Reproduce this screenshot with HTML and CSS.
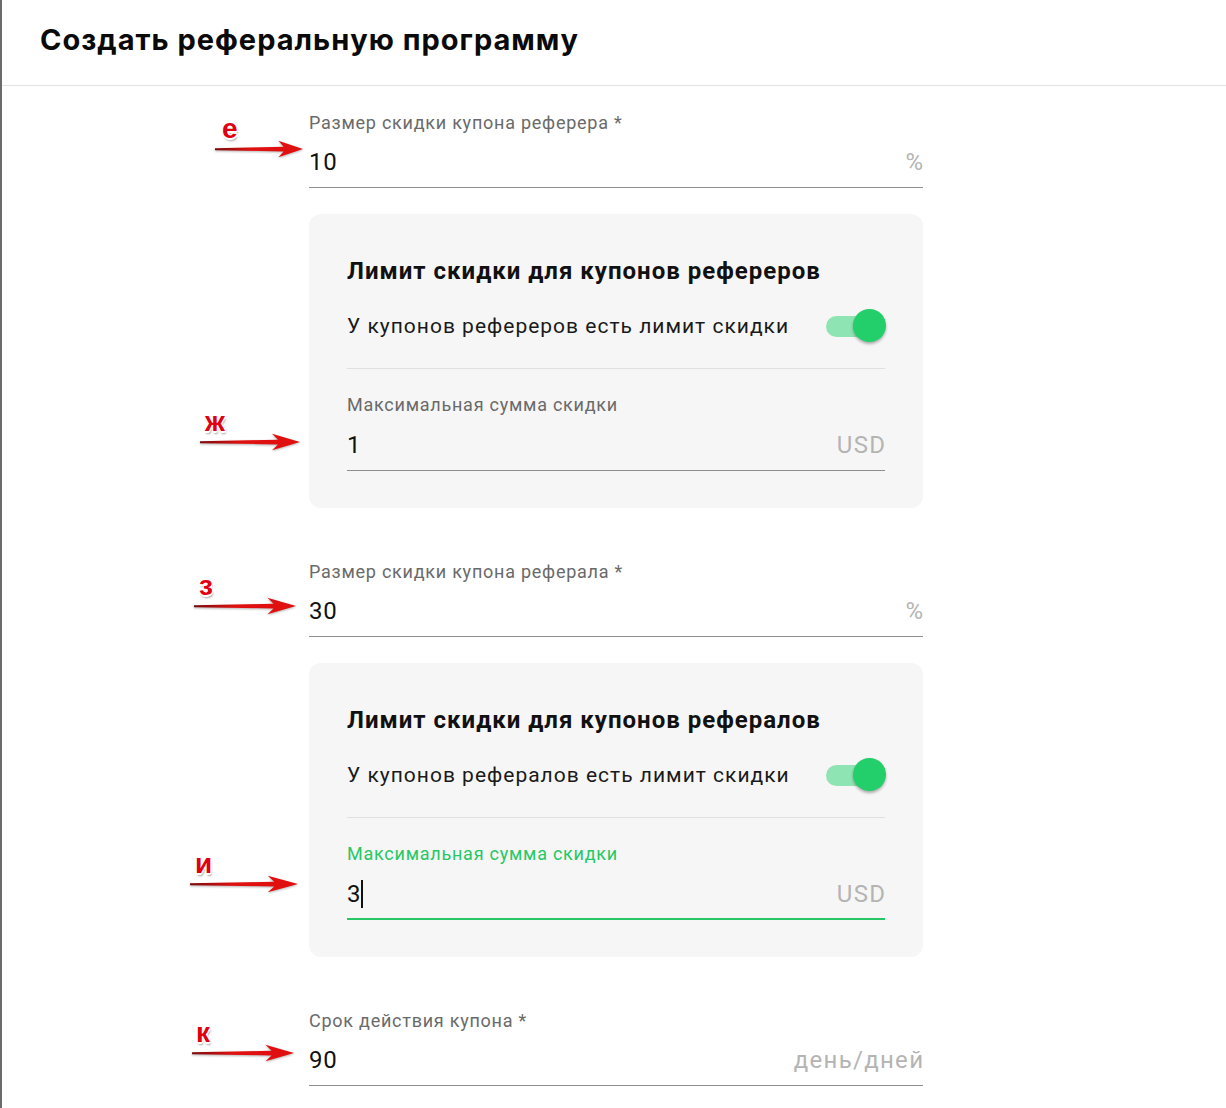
FILE: index.html
```html
<!DOCTYPE html>
<html lang="ru">
<head>
<meta charset="utf-8">
<title>Создать реферальную программу</title>
<link rel="stylesheet" href="styles.css">
</head>
<body>
<div class="page">
  <header class="header">
    <h1 class="title">Создать реферальную программу</h1>
  </header>
  <main class="form">
    <div class="field">
      <div class="note note-e">
        <span class="note-letter">е</span>
        <svg class="note-arrow" viewBox="0 0 100 18" preserveAspectRatio="none"><defs><linearGradient id="g1" x1="0" x2="1" y1="0" y2="0"><stop offset="0" stop-color="#7a0a0a"/><stop offset="0.4" stop-color="#e01010"/><stop offset="1" stop-color="#e01010"/></linearGradient></defs><path d="M0 8.2 L78 6.8 L72 0.8 L100 9 L72 17.2 L78 11.4 L0 10.2 Z" fill="url(#g1)"/></svg>
      </div>
      <label class="field-label">Размер скидки купона реферера *</label>
      <div class="field-input"><span class="field-value">10</span><span class="field-suffix">%</span></div>
    </div>

    <section class="card">
      <h2 class="card-title">Лимит скидки для купонов рефереров</h2>
      <div class="toggle-row">
        <span>У купонов рефереров есть лимит скидки</span>
        <span class="toggle"><span class="toggle-track"></span><span class="toggle-knob"></span></span>
      </div>
      <div class="card-field field">
        <div class="note note-zh">
          <span class="note-letter">ж</span>
          <svg class="note-arrow" viewBox="0 0 100 18" preserveAspectRatio="none"><path d="M0 8.2 L78 6.8 L72 0.8 L100 9 L72 17.2 L78 11.4 L0 10.2 Z" fill="url(#g1)"/></svg>
        </div>
        <label class="field-label">Максимальная сумма скидки</label>
        <div class="field-input"><span class="field-value">1</span><span class="field-suffix">USD</span></div>
      </div>
    </section>

    <div class="field field-gap">
      <div class="note note-z">
        <span class="note-letter">з</span>
        <svg class="note-arrow" viewBox="0 0 100 18" preserveAspectRatio="none"><path d="M0 8.2 L78 6.8 L72 0.8 L100 9 L72 17.2 L78 11.4 L0 10.2 Z" fill="url(#g1)"/></svg>
      </div>
      <label class="field-label">Размер скидки купона реферала *</label>
      <div class="field-input"><span class="field-value">30</span><span class="field-suffix">%</span></div>
    </div>

    <section class="card">
      <h2 class="card-title">Лимит скидки для купонов рефералов</h2>
      <div class="toggle-row">
        <span>У купонов рефералов есть лимит скидки</span>
        <span class="toggle"><span class="toggle-track"></span><span class="toggle-knob"></span></span>
      </div>
      <div class="card-field field focused">
        <div class="note note-i">
          <span class="note-letter">и</span>
          <svg class="note-arrow" viewBox="0 0 100 18" preserveAspectRatio="none"><path d="M0 8.2 L78 6.8 L72 0.8 L100 9 L72 17.2 L78 11.4 L0 10.2 Z" fill="url(#g1)"/></svg>
        </div>
        <label class="field-label">Максимальная сумма скидки</label>
        <div class="field-input"><span class="field-value">3<span class="caret"></span></span><span class="field-suffix">USD</span></div>
      </div>
    </section>

    <div class="field field-gap">
      <div class="note note-k">
        <span class="note-letter">к</span>
        <svg class="note-arrow" viewBox="0 0 100 18" preserveAspectRatio="none"><path d="M0 8.2 L78 6.8 L72 0.8 L100 9 L72 17.2 L78 11.4 L0 10.2 Z" fill="url(#g1)"/></svg>
      </div>
      <label class="field-label">Срок действия купона *</label>
      <div class="field-input"><span class="field-value">90</span><span class="field-suffix">день/дней</span></div>
    </div>
  </main>
</div>
</body>
</html>
```

FILE: styles.css
```css
* { box-sizing: border-box; }
html, body { margin: 0; padding: 0; background: #fff; }
body { font-family: Roboto, "Noto Sans", Arial, sans-serif; color: #111; overflow: hidden; }

.page {
  border-left: 2px solid #6b6b6b;
  min-height: 1108px;
}

.header {
  height: 86px;
  border-bottom: 1px solid #e3e3e3;
  display: flex;
  align-items: center;
  padding-left: 38px;
}
.title {
  margin: 0;
  font-family: Inter, "Noto Sans", sans-serif;
  font-weight: 700;
  font-size: 29px;
  letter-spacing: 1px;
  color: #0a0a0a;
  padding-bottom: 6px;
}

.form {
  width: 614px;
  margin-left: 307px;
  padding-top: 26px;
  display: flex;
  flex-direction: column;
}

.field { position: relative; }
.field-gap { margin-top: 53px; }

.field-label {
  display: block;
  font-size: 18px;
  letter-spacing: 0.75px;
  line-height: 22px;
  color: #6a6a6a;
}
.field-input {
  display: flex;
  align-items: center;
  justify-content: space-between;
  padding: 12px 0 9px;
  border-bottom: 1px solid #8e8e8e;
}
.field-value {
  font-size: 24px;
  letter-spacing: 0.8px;
  line-height: 32px;
  color: #111;
  display: flex;
  align-items: center;
}
.field-suffix {
  font-size: 24px;
  letter-spacing: 1.3px;
  margin-right: -1.3px;
  line-height: 32px;
  color: #b4b4b4;
}
.caret {
  display: inline-block;
  width: 2px;
  height: 28px;
  background: #111;
  margin-left: 0;
}

.card {
  margin-top: 26px;
  background: #f6f6f6;
  border-radius: 12px;
  padding: 41px 38px 37px;
}
.card-title {
  margin: 0;
  font-size: 24px;
  letter-spacing: 1px;
  line-height: 32px;
  font-weight: 700;
  color: #111;
}
.toggle-row {
  margin-top: 19px;
  height: 40px;
  display: flex;
  align-items: center;
  justify-content: space-between;
  font-size: 21px;
  letter-spacing: 1px;
  color: #1a1a1a;
  border-bottom: 1px solid #e0e0e0;
  box-sizing: content-box;
  padding-bottom: 22px;
}
.toggle {
  position: relative;
  width: 60px;
  height: 34px;
  display: block;
}
.toggle-track {
  position: absolute;
  left: 1px;
  top: 7px;
  width: 52px;
  height: 21px;
  border-radius: 11px;
  background: #8fe4b3;
}
.toggle-knob {
  position: absolute;
  right: -1px;
  top: 0;
  width: 33px;
  height: 33px;
  border-radius: 50%;
  background: #22cf6b;
  box-shadow: 0 2px 3px rgba(0,0,0,0.3);
}

.card-field { margin-top: 25px; }
.card-field .field-input { padding-top: 13px; }
.focused .field-label { color: #25c865; }
.focused .field-input { border-bottom: 2px solid #25c865; padding-bottom: 8px; }

/* annotations */
.note {
  position: absolute;
  display: flex;
  flex-direction: column;
  pointer-events: none;
}
.note-letter {
  font-family: "Liberation Sans", Arial, sans-serif;
  font-weight: 700;
  font-size: 28px;
  line-height: 22px;
  color: #e0000f;
  text-shadow: 1px 1px 0 #fff, -1px -1px 0 #fff, 1px -1px 0 #fff, -1px 1px 0 #fff, 0 2px 0 #fff, 1px 3px 2px rgba(0,0,0,0.35);
}
.note-arrow {
  display: block;
  height: 18px;
  filter: drop-shadow(0 1px 1px rgba(0,0,0,0.3));
}
.note-e { top: 6px; left: -94px; }
.note-e .note-letter { padding-left: 7px; }
.note-e .note-arrow { width: 88px; }

.note-zh { top: 17px; left: -147px; }
.note-zh .note-letter { padding-left: 5px; }
.note-zh .note-arrow { width: 100px; }

.note-z { top: 14px; left: -115px; }
.note-z .note-letter { padding-left: 5px; }
.note-z .note-arrow { width: 102px; }

.note-i { top: 10px; left: -157px; }
.note-i .note-letter { padding-left: 5px; }
.note-i .note-arrow { width: 108px; }

.note-k { top: 12px; left: -117px; }
.note-k .note-letter { padding-left: 4px; }
.note-k .note-arrow { width: 102px; }
```
